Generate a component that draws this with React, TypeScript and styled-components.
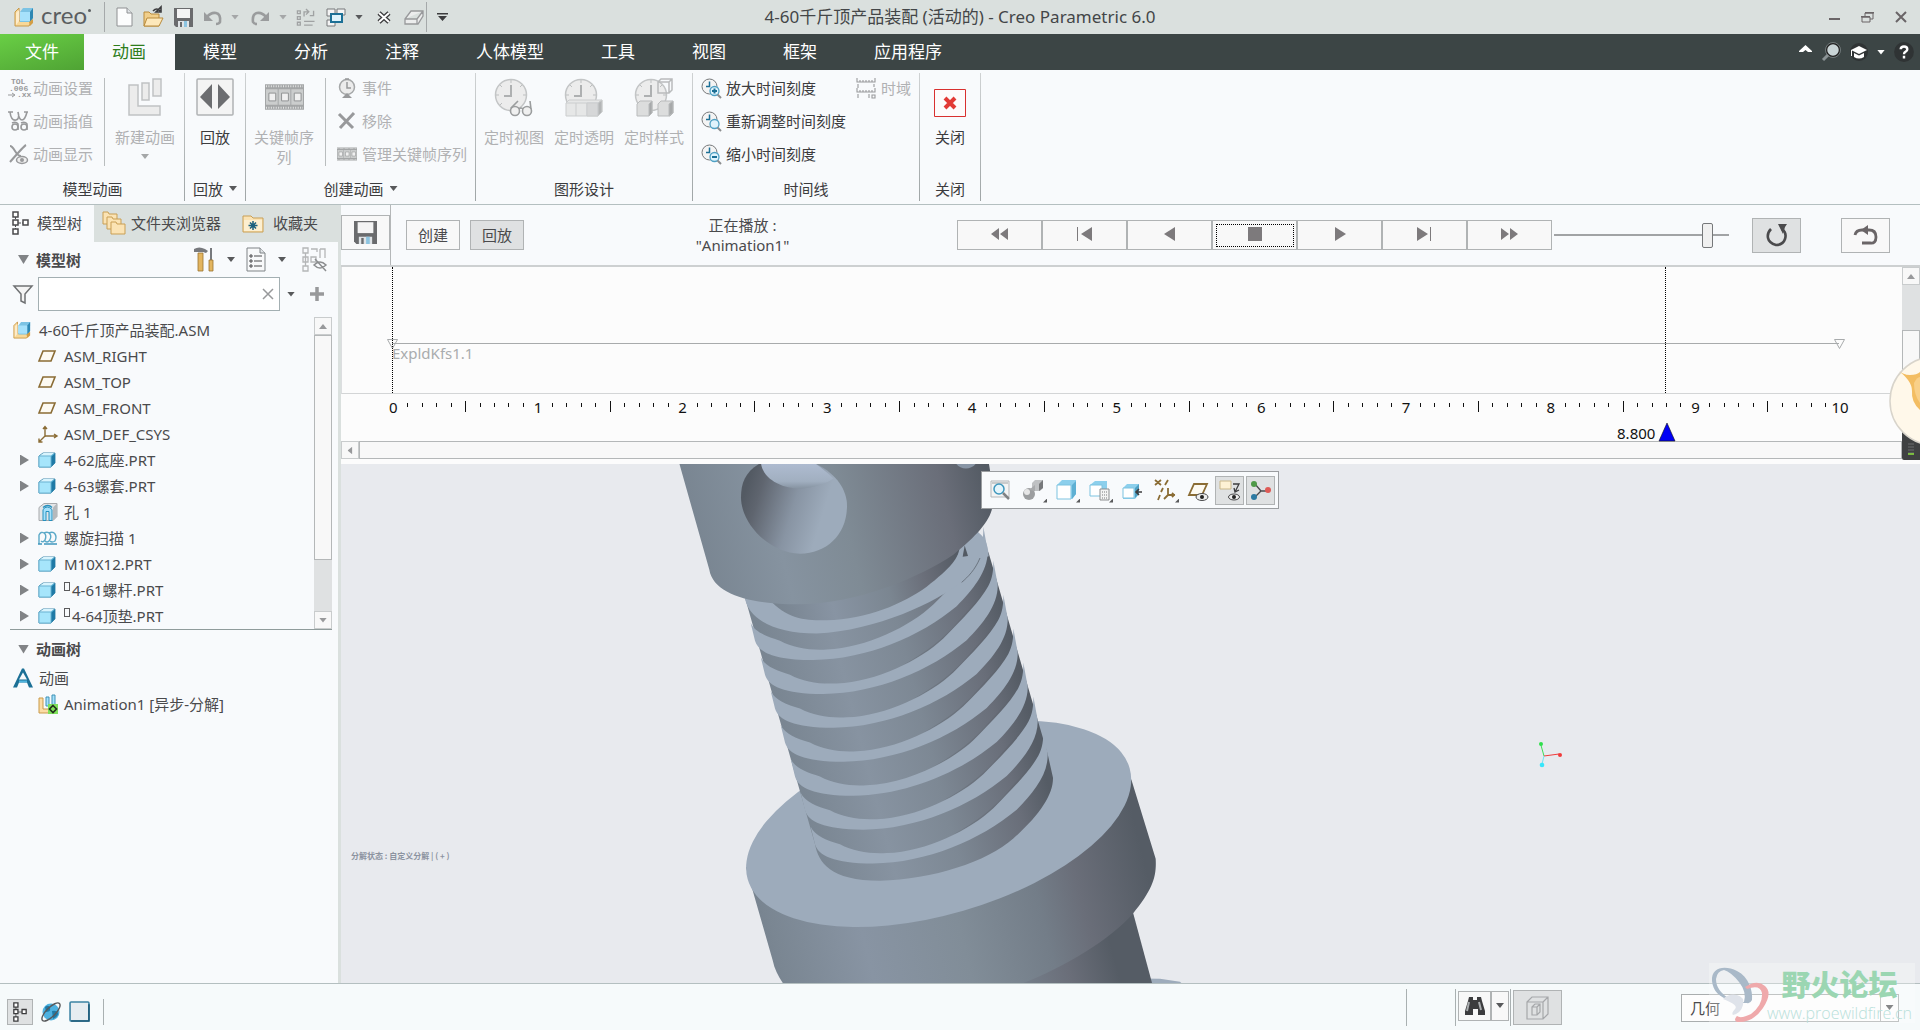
import React from 'react';
import styled, { createGlobalStyle, css } from 'styled-components';

const sans = `"Noto Sans", "Noto Sans CJK SC", sans-serif`;

const Global = createGlobalStyle`
  *, *::before, *::after { box-sizing: border-box; }
  body { margin: 0; background: #f7fafb; color: #4a4a4c; font: 15px/20px ${sans}; }
  button, input, select { font: inherit; color: inherit; margin: 0; }
  button { padding: 0; border: 0; background: none; white-space: nowrap; }
  ul { list-style: none; margin: 0; padding: 0; }
`;

/* ---------- shared parts ---------- */

const App_ = styled.div`
  display: grid;
  grid-template-rows: auto auto auto minmax(0, 1fr) auto;
  height: 100vh;
  min-width: 1280px;
  overflow: hidden;
`;

const Icon = styled.svg<{ $w?: number; $h?: number; $dim?: boolean }>`
  display: block;
  flex: none;
  width: ${p => p.$w ?? 20}px;
  height: ${p => p.$h ?? p.$w ?? 20}px;
  opacity: ${p => (p.$dim ? 0.55 : 1)};
  overflow: visible;
`;

const Caret = styled.span<{ $c?: string; $dir?: 'up' | 'down' | 'left' | 'right' }>`
  flex: none;
  width: 8px;
  height: 5px;
  background: ${p => p.$c ?? '#58595b'};
  clip-path: polygon(0 0, 100% 0, 50% 100%);
  ${p => p.$dir === 'up' && css`transform: rotate(180deg);`}
  ${p => p.$dir === 'left' && css`transform: rotate(90deg);`}
  ${p => p.$dir === 'right' && css`transform: rotate(-90deg);`}
`;

const Push = styled.div`flex: 1;`;

/* ---------- title bar ---------- */

const TitleBar = styled.header`
  display: grid;
  grid-template-columns: 1fr auto 1fr;
  align-items: center;
  height: 34px;
  background: #dae0de;
`;
const QuickBar = styled.div`
  display: flex;
  align-items: center;
  padding-left: 14px;
  height: 34px;
`;
const Brand = styled.div`
  display: flex;
  align-items: center;
  gap: 7px;
  width: 90px;
  font: 24px/24px Lato, sans-serif;
  color: #5a5e61;
`;
const BrandName = styled.span`
  display: flex;
  padding-bottom: 5px;
  &::after {
    content: '';
    width: 3px;
    height: 3px;
    margin: 6px 0 0 1px;
    border-radius: 2px;
    background: #5a5e61;
  }
`;
const QuickSep = styled.span`
  width: 1px;
  height: 30px;
  background: #a5a9aa;
`;
const QuickButton = styled.button<{ $w: number }>`
  display: flex;
  align-items: center;
  justify-content: center;
  width: ${p => p.$w}px;
  height: 30px;
`;
const Title = styled.h1`
  margin: 0;
  font: 400 17px/24px ${sans};
  color: #434648;
`;
const WindowButtons = styled.div`
  display: flex;
  justify-content: flex-end;
  padding-right: 3px;
`;

/* ---------- menu ---------- */

const MenuBar = styled.nav`
  display: flex;
  align-items: stretch;
  height: 36px;
  background: #3c4545;
`;
const MenuTab = styled.button<{ $kind?: 'file' | 'active' }>`
  padding: 0 29px 0 28px;
  font-size: 17px;
  line-height: 34px;
  color: #fff;
  ${p => p.$kind === 'file' && css`
    padding: 0 25px;
    background: linear-gradient(165deg, #69cf45, #4fa334);
  `}
  ${p => p.$kind === 'active' && css`
    background: #f8fafc;
    color: #2f7d1c;
  `}
`;
const MenuTools = styled.div`
  display: flex;
  align-items: center;
  gap: 8px;
  padding-right: 5px;
`;

/* ---------- ribbon ---------- */

const Ribbon = styled.section`
  display: flex;
  height: 135px;
  padding-top: 1px;
  background: #f8fafc;
  border-bottom: 1px solid #b4bfc0;
`;
const Group = styled.div<{ $w: number }>`
  display: grid;
  grid-template-rows: 100px 33px;
  width: ${p => p.$w}px;
`;
const GroupBody = styled.div<{ $pad?: number }>`
  display: flex;
  padding-left: ${p => p.$pad ?? 0}px;
`;
const GroupLabel = styled.div`
  display: flex;
  align-items: center;
  justify-content: center;
  gap: 6px;
  padding-top: 2px;
  color: #3c3c3e;
`;
const GroupSep = styled.span`
  width: 1px;
  margin: 2px 0 3px;
  background: linear-gradient(#cfd2d3, #9fa5a6);
`;
const InnerSep = styled.span`
  flex: none;
  width: 1px;
  height: 88px;
  margin-top: 7px;
  background: #b9bdbe;
`;
const SmallColumn = styled.div<{ $w: number }>`
  width: ${p => p.$w}px;
`;
const SmallButton = styled.button`
  display: flex;
  align-items: center;
  gap: 5px;
  height: 33px;
  color: #3c3c3e;
  &:disabled { color: #b0b1b3; }
`;
const BigButton = styled.button<{ $w: number }>`
  display: flex;
  flex-direction: column;
  align-items: center;
  width: ${p => p.$w}px;
  padding-top: 6px;
  color: #3c3c3e;
  white-space: normal;
  &:disabled { color: #b0b1b3; }
`;
const BigIconBox = styled.span<{ $low?: boolean }>`
  display: grid;
  place-items: ${p => (p.$low ? 'end' : 'center')};
  height: 40px;
  margin-bottom: 10px;
`;
const BigText = styled.span`width: 60px;`;
const CaretLine = styled.span`
  display: grid;
  place-items: center;
  height: 19px;
`;

/* ---------- left panel ---------- */

const Body = styled.div`
  display: grid;
  grid-template-columns: 341px minmax(0, 1fr);
  min-height: 0;
`;
const Side = styled.aside`
  display: flex;
  flex-direction: column;
  border-right: 3px solid #dae0de;
  background: #f8fafc;
`;
const SideTabs = styled.div`
  display: flex;
  height: 37px;
  background: #dae0de;
`;
const SideTab = styled.button<{ $active?: boolean; $w: number }>`
  display: flex;
  align-items: center;
  gap: 5px;
  width: ${p => p.$w}px;
  padding: 0 0 2px ${p => (p.$active ? 12 : 8)}px;
  background: ${p => (p.$active ? '#f8fafc' : 'transparent')};
`;
const PanelHead = styled.div<{ $h: number; $top?: number }>`
  display: flex;
  align-items: center;
  height: ${p => p.$h}px;
  margin-top: ${p => p.$top ?? 0}px;
  padding: 0 11px 0 18px;
`;
const PanelTitle = styled.h2`
  margin: 0 0 0 7px;
  font: 600 15px/20px ${sans};
`;
const HeadTool = styled.button<{ $w: number }>`
  display: flex;
  align-items: center;
  gap: 12px;
  width: ${p => p.$w}px;
`;
const FilterRow = styled.div`
  display: flex;
  align-items: center;
  height: 34px;
  padding-left: 13px;
`;
const FilterBox = styled.div`
  display: flex;
  align-items: center;
  width: 242px;
  height: 34px;
  margin: 0 7px 0 5px;
  border: 1px solid #a3afb2;
  background: #fff;
`;
const FilterInput = styled.input`
  flex: 1;
  min-width: 0;
  height: 30px;
  padding: 0 6px;
  border: 0;
  outline: 0;
  background: none;
`;
const ClearButton = styled.button`
  width: 22px;
  display: grid;
  place-items: center;
`;
const TreeBox = styled.div`
  display: flex;
  height: 313px;
  margin: 6px 6px 0 10px;
  border-bottom: 1px solid #8f9b9b;
`;
const Tree = styled.ul`
  flex: 1;
  overflow: hidden;
`;
const Row = styled.li<{ $level: number }>`
  display: flex;
  align-items: center;
  height: 26px;
  padding-left: ${p => (p.$level ? 8 : 3)}px;
  white-space: nowrap;
`;
const Twist = styled.span`
  display: flex;
  width: 20px;
  flex: none;
`;
const TwistMark = styled.span`
  width: 9px;
  height: 11px;
  margin-left: 2px;
  background: #818386;
  clip-path: polygon(0 0, 100% 50%, 0 100%);
`;
const OpenMark = styled.span`
  width: 11px;
  height: 9px;
  background: #818386;
  clip-path: polygon(0 0, 100% 0, 50% 100%);
`;
const RowText = styled.span`margin-left: 6px;`;
const PlacedMark = styled.sup`
  display: inline-block;
  width: 6px;
  height: 9px;
  margin-right: 2px;
  border: 1px solid #5a5a5c;
  vertical-align: 5px;
`;
const AnimTree = styled.ul`padding-left: 10px;`;

const ScrollColumn = styled.div`
  display: flex;
  flex-direction: column;
  width: 18px;
  background: #dfe1e2;
`;
const ScrollButton = styled.button`
  display: grid;
  place-items: center;
  flex: none;
  width: 18px;
  height: 18px;
  border: 1px solid #c9cccd;
  background: #f8f8f8;
`;
const ScrollThumb = styled.div<{ $h: number }>`
  height: ${p => p.$h}px;
  border: 1px solid #b4b7b8;
  background: #f8f8f8;
`;

/* ---------- player ---------- */

const Main = styled.main`
  display: flex;
  flex-direction: column;
  min-width: 0;
  min-height: 0;
`;
const Player = styled.div`
  display: flex;
  align-items: center;
  height: 62px;
  background: #f8fafc;
  border-bottom: 2px solid #cdd0d1;
`;
const SaveCell = styled.div`
  display: flex;
  align-items: center;
  align-self: stretch;
  width: 50px;
  padding-bottom: 5px;
  border-right: 1px solid #b4b7b8;
`;
const BoxButton = styled.button<{ $w: number; $h: number; $on?: boolean }>`
  display: grid;
  place-items: center;
  flex: none;
  width: ${p => p.$w}px;
  height: ${p => p.$h}px;
  border: 1px solid #b0b3b4;
  background: ${p => (p.$on ? '#dfe1e2' : '#f8f8f8')};
`;
const Modes = styled.div`
  display: flex;
  gap: 10px;
  padding-left: 15px;
`;
const NowPlaying = styled.div`
  flex: 1;
  padding-left: 4px;
  text-align: center;
`;
const Transport = styled.div`
  display: flex;
  width: 595px;
`;
const TransportButton = styled.button`
  display: grid;
  place-items: center;
  flex: 1;
  height: 30px;
  padding: 2px;
  border: 1px solid #b0b3b4;
  background: #f8f8f8;
`;
const FocusRing = styled.span<{ $on?: boolean }>`
  display: grid;
  place-items: center;
  width: 78px;
  height: 23px;
  padding-bottom: 3px;
  border: 1px ${p => (p.$on ? 'dotted #000' : 'solid transparent')};
`;
const Speed = styled.input`
  appearance: none;
  width: 175px;
  height: 26px;
  margin: 0 23px 0 2px;
  background: linear-gradient(#a1a3a5, #a1a3a5) center / 100% 2px no-repeat;
  &::-webkit-slider-thumb {
    appearance: none;
    width: 11px;
    height: 25px;
    border: 1px solid #76787a;
    border-radius: 2px;
    background: #f0f0f0;
  }
`;
const EndTools = styled.div`
  display: flex;
  gap: 40px;
  padding-right: 30px;
`;

/* ---------- timeline ---------- */

const Timeline = styled.section`
  position: relative;
  padding-bottom: 5px;
  background: #fcfcfc;
`;
const TrackArea = styled.div`
  display: flex;
  height: 127px;
  border-bottom: 1px solid #d3d5d6;
  border-left: 1px solid #dcdee0;
`;
const Track = styled.div`
  position: relative;
  flex: 1;
  margin: 0 63px 0 50px;
`;
const TrackLine = styled.div`
  height: 77px;
  border-bottom: 1px solid #a8abac;
`;
const TrackName = styled.div`
  line-height: 18px;
  color: #a9acae;
`;
const Guide = styled.span`
  position: absolute;
  top: 0;
  bottom: 0;
  border-left: 1px dotted #000;
`;
const KeyMark = styled(Icon)`
  position: absolute;
  top: 72px;
  margin-left: -5px;
`;
const Ruler = styled.div`
  display: flex;
  height: 29px;
  padding: 3px 73px 0 45px;
  color: #111;
`;
const Tick = styled.span<{ $major?: boolean }>`
  display: flex;
  flex: 1 1 0;
  width: 0;
  justify-content: center;
  &::before {
    content: '';
    width: 1px;
    height: ${p => (p.$major ? 11 : 4)}px;
    margin-top: ${p => (p.$major ? 4 : 6)}px;
    background: #111;
  }
`;
const TickLabel = styled.span`
  display: flex;
  flex: 1 1 0;
  width: 0;
  justify-content: center;
`;
const CursorRow = styled.div`
  display: flex;
  height: 18px;
  padding: 0 80px 0 52px;
  color: #111;
`;
const CursorTrack = styled.div`position: relative; flex: 1;`;
const Cursor = styled.div`
  position: absolute;
  right: 12%;
  display: flex;
  gap: 4px;
  margin-right: -9px;
  line-height: 20px;
`;
const HScroll = styled.div`
  display: flex;
  height: 18px;
  margin-right: 18px;
`;
const HThumb = styled.div`
  flex: 1;
  border: 1px solid #b4b7b8;
  background: #f8f8f8;
`;

/* ---------- viewport ---------- */

const Viewport = styled.section`
  position: relative;
  flex: 1;
  min-height: 0;
  overflow: hidden;
  background: #e8eaee;
`;
const Scene = styled.svg`
  display: block;
  width: 100%;
  height: 100%;
`;
const SceneNote = styled.div`
  position: absolute;
  left: 10px;
  top: 382px;
  font: 700 8px/20px "Noto Sans CJK SC", sans-serif;
  color: #8c93a0;
`;
const ViewTools = styled.div`
  position: absolute;
  left: 640px;
  top: 7px;
  display: flex;
  align-items: center;
  gap: 3px;
  height: 38px;
  padding: 0 3px;
  border: 1px solid #9a9da0;
  background: #f8fafc;
`;
const ViewTool = styled.button<{ $on?: boolean }>`
  position: relative;
  display: grid;
  place-items: center;
  width: ${p => (p.$on ? 29 : 30)}px;
  height: 29px;
  margin-left: ${p => (p.$on ? -1 : 0)}px;
  border: 1px solid ${p => (p.$on ? '#b0b3b4' : 'transparent')};
  background: ${p => (p.$on ? '#dfe1e2' : 'none')};
`;
const Corner = styled.span`
  position: absolute;
  right: 0;
  bottom: 1px;
  width: 4px;
  height: 4px;
  background: #58595b;
  clip-path: polygon(100% 0, 100% 100%, 0 100%);
`;
const Mascot = styled(Icon)`
  position: absolute;
  right: 0;
  top: 86px;
`;

/* ---------- status bar ---------- */

const StatusBar = styled.footer`
  position: relative;
  display: flex;
  align-items: center;
  height: 47px;
  padding: 1px 21px 0 7px;
  border-top: 1px solid #b4bfc0;
  background: #f6fafb;
`;
const StatusSep = styled.span<{ $h: number; $l: number; $r: number }>`
  width: 1px;
  height: ${p => p.$h}px;
  margin: 0 ${p => p.$r}px 0 ${p => p.$l}px;
  background: #a9b0b1;
`;
const StatusTools = styled.div`
  display: flex;
  align-items: center;
  gap: 8px;
  padding-top: 8px;
`;
const FindBox = styled.div`
  display: flex;
  margin-bottom: 4px;
`;
const Picker = styled.div`
  position: relative;
  display: flex;
  align-items: center;
  width: 218px;
  margin-left: 119px;
`;
const PickerSelect = styled.select`
  appearance: none;
  width: 100%;
  height: 28px;
  padding: 0 8px;
  border: 1px solid #a9adae;
  border-radius: 0;
  background: #fdfdfd;
`;
const PickerArrow = styled.span`
  position: absolute;
  right: 1px;
  display: grid;
  place-items: center;
  width: 18px;
  height: 26px;
  border-left: 1px solid #b4b7b8;
  pointer-events: none;
`;
const Watermark = styled.div`
  position: absolute;
  right: 5px;
  bottom: 7px;
  display: flex;
  width: 206px;
  height: 60px;
  background: rgba(255, 255, 255, 0.28);
  pointer-events: none;
`;
const MarkText = styled.div`
  margin-left: -4px;
  text-align: center;
`;
const MarkName = styled.div`
  font: 900 29px/40px "Noto Sans CJK SC", sans-serif;
  color: #9bd6b2;
`;
const MarkUrl = styled.div`
  font: 300 16px/20px "Open Sans", sans-serif;
  color: #b8e0da;
`;

/* ---------- drawings ---------- */

const AsmIcon = ({ size = 20 }: { size?: number }) => (
  <Icon $w={size} viewBox="0 0 20 20">
    <path d="M1 5l4-4v13h13l-3 5H1z" fill="#f8d898" stroke="#c99a4a" />
    <path d="M2 6l3-3v11l-3 4z" fill="#fdeccb" />
    <path d="M6 5l3-4h10v10l-3 4H6z" fill="#7cc3e4" />
    <path d="M6 5h10v9H6z" fill="#a6e1fb" />
    <path d="M16 5l3-4v10l-3 4z" fill="#2d87b3" />
    <path d="M15 15l4-3v4l-3 3z" fill="#d39e45" />
  </Icon>
);
const DiskIcon = ({ size = 19 }: { size?: number }) => (
  <Icon $w={size} viewBox="0 0 19 19">
    <path d="M0 0h19v19H2l-2-2z" fill="#6a6b6d" />
    <path d="M3 1h13v9H3z" fill="#f4f4f4" />
    <path d="M4 13h11v6H4z" fill="#dfe3e6" />
    <path d="M10 13h3v6h-3z" fill="#8cc4e0" />
    <path d="M6 14h2v5H6z" fill="#6a6b6d" />
  </Icon>
);
const PartIcon = () => (
  <Icon $w={18} $h={16} viewBox="0 0 18 16">
    <path d="M1 4l4-3h12v10l-4 4H1z" fill="#55aed4" stroke="#4a8fb0" />
    <path d="M1 4h12v11H1z" fill="#a6e5fb" stroke="#6cb4d2" />
    <path d="M2 3.500l3.500-2.500H16l-3 2.500z" fill="#d9f4fd" />
    <path d="M13.500 4.500L17 1.500v9l-3.500 4z" fill="#1f7aa6" />
  </Icon>
);
const PlaneIcon = () => (
  <Icon $w={18} $h={14} viewBox="0 0 18 14">
    <path d="M5 2h12l-4 10H1z" fill="#fdfaf2" stroke="#8a6c35" strokeWidth="1.6" />
  </Icon>
);
const CsysIcon = () => (
  <Icon $w={20} $h={18} viewBox="0 0 20 18">
    <path d="M7 11V2M5 4l2-2.500L9 4M7 11h11M16 9l3 2-3 2M7 11l-6 6M1 13.500V17h3.500" fill="none" stroke="#8a6c35" strokeWidth="1.400" />
  </Icon>
);
const HoleIcon = () => (
  <Icon viewBox="0 0 20 19">
    <path d="M1 5l5-4h13v13l-4 4H1z" fill="#e4e6e8" stroke="#a6a9ac" />
    <path d="M15 5l4-4v13l-4 4z" fill="#b5b9bc" />
    <path d="M5 18V7q4-5 9 0v11h-3V9H8v9z" fill="#a6e1fb" stroke="#2490be" />
    <path d="M5 5q5-4 9 0" fill="none" stroke="#2490be" strokeWidth="1.500" />
  </Icon>
);
const HelixIcon = () => (
  <Icon $h={14} viewBox="0 0 20 14">
    <g fill="none" stroke="#5ba9c8" strokeWidth="1.400">
      <path d="M1 13V4q2-4 5-2t1 7q-2 3-4 1" />
      <path d="M6 2q4-2 6 1t-1 7q-2 2-4 0" />
      <path d="M11 2q4-2 6 1t0 7q-3 2-5 0" />
    </g>
    <path d="M0 13h4M6 13h13" stroke="#3f97bd" strokeWidth="1.500" />
  </Icon>
);
const AnimRootIcon = () => (
  <Icon viewBox="0 0 20 19">
    <path d="M0 19L9 0h2l9 19h-4l-2-5H6l-2 5z" fill="#1c7096" />
    <path d="M10 4l4 7H6z" fill="#f8fafc" />
    <path d="M6 13h8" stroke="#4fb4de" strokeWidth="2" />
  </Icon>
);
const AnimIcon = () => (
  <Icon viewBox="0 0 20 20">
    <path d="M1 4h4v11h9v4H1z" fill="#fbdca5" stroke="#c99a4a" />
    <path d="M8 3h3v9H8zM14 1h3v10h-3z" fill="#a6e1fb" stroke="#3c91b6" />
    <rect x="10" y="10" width="10" height="10" fill="#7ee05a" />
    <path d="M15 11.500l3.500 3.500-3.500 3.500-3.500-3.500z" fill="none" stroke="#23301c" strokeWidth="1.600" />
  </Icon>
);
const TreeIcon = () => (
  <Icon $w={17} $h={24} viewBox="0 0 17 24">
    <path d="M3.500 5v14M6 12h5" stroke="#4a4a4c" strokeDasharray="3 1" />
    <path d="M1 1h5v5H1zM1 9h5v5H1zM1 18h5v5H1zM11 9h5v5h-5z" fill="#fff" stroke="#4a4a4c" strokeWidth="1.500" />
  </Icon>
);
const Folder = ({ star }: { star?: boolean }) => (
  <Icon $w={22} $h={20} viewBox="0 0 22 20">
    <path d="M1 3h8l2 2h10v14H1z" fill="#fbe3b4" stroke="#c99f55" />
    <path d="M2 7h18v11H2z" fill="#fdefd0" />
    {star && <path d="M11 8v9M6.500 12.500h9M8 9.500l6 6M14 9.500l-6 6" stroke="#1b607e" strokeWidth="1.500" />}
  </Icon>
);
const Folders = () => (
  <Icon $w={24} viewBox="0 0 24 24">
    {[[0, 0], [4, 5], [8, 10]].map(([x, y]) => (
      <path key={x} d={`M${x + 1} ${y + 1}h5l1 2h8v10H${x + 1}z`} fill="#fbe3b4" stroke="#c99f55" />
    ))}
  </Icon>
);
const Clock = ({ extra }: { extra: 'glasses' | 'cubes' | 'style' }) => (
  <Icon $w={40} $h={40} viewBox="0 0 40 40">
    <circle cx="17" cy="18" r="15.500" fill="#ececec" stroke="#c3c5c6" strokeWidth="1.500" />
    <path d="M17 8v11h-7" fill="none" stroke="#aeb0b1" strokeWidth="2" />
    <path d="M17 3v3M17 30v3M2 18h3M29 18h3M6 8l2 2M28 8l-2 2M6 28l2-2" stroke="#bdbfc0" />
    {extra === 'glasses' && (
      <g fill="#f0f0f0" stroke="#9b9d9e" strokeWidth="1.600">
        <circle cx="21" cy="34" r="4.500" /><circle cx="33" cy="34" r="4.500" />
        <path d="M25 32q2-2 4 0M17 31l7-7M37 32l-1-8" fill="none" />
      </g>
    )}
    {extra === 'cubes' && (
      <g fill="#e6e7e7" stroke="#cbcdce">
        <path d="M2 26l3-3h33v12l-4 4H2z" /><path d="M12 26v13M23 26v13M34 26l4-3M2 26h32v13" fill="none" />
        <path d="M23 26h11v13H23z" fill="#d6d7d8" /><path d="M34 26l4-3v12l-4 4z" fill="#b3b5b6" />
      </g>
    )}
    {extra === 'style' && (
      <g fill="#dcdddd" stroke="#b9bbbc">
        <path d="M24 5l3-3h11v11l-3 3H24zM24 5h11v11M35 5l3-3" fill="none" strokeWidth="1.500" />
        <path d="M3 27l3-3h12v12l-3 3H3zM24 27l3-3h12v12l-3 3H24z" />
        <path d="M15 27l3-3v12l-3 3zM35 27l4-3v12l-4 3z" fill="#a7a9aa" />
      </g>
    )}
  </Icon>
);
const ZoomClock = ({ sign }: { sign: string }) => (
  <Icon viewBox="0 0 20 20">
    <circle cx="8.500" cy="8.500" r="7.500" fill="#f4f4f4" stroke="#77797b" />
    <path d="M8.500 3.500v5H5" fill="none" stroke="#1c7096" strokeWidth="1.500" />
    <circle cx="13.500" cy="13" r="4.500" fill="#dff3fc" stroke="#4ea0c4" strokeWidth="1.300" />
    <path d="M16.500 16.500L20 20" stroke="#8b8d8f" strokeWidth="2" />
    {sign && <path d={sign} stroke="#1c7096" strokeWidth="2" />}
  </Icon>
);
const Film = ({ w, h }: { w: number; h: number }) => (
  <Icon $w={w} $h={h} viewBox="0 0 40 26">
    <path d="M0 0h40v26H0z" fill="#a4a6a7" />
    <path d="M1 2h38M1 24h38" stroke="#e4e5e5" strokeWidth="2" strokeDasharray="1 1.500" />
    <path d="M1 5h12v16H1zM14 5h12v16H14zM27 5h12v16H27z" fill="#cbcdcd" />
    <path d="M4 9h7v8H4zM17 9h7v8h-7zM30 9h7v8h-7z" fill="#f0f0f0" stroke="#8f9192" />
  </Icon>
);
const TolIcon = () => (
  <Icon viewBox="0 0 20 20">
    <g fontFamily="Liberation Mono, monospace" fontSize="8" fontWeight="700" fill="#98999b">
      <text x="3" y="6">TOL</text><text x="1" y="13">.006</text><text x="9" y="19">.xx</text>
    </g>
    <path d="M0 17h6M4 15l3 2-3 2" fill="none" stroke="#98999b" />
  </Icon>
);
const CurveIcon = () => (
  <Icon viewBox="0 0 20 20">
    <g fill="none" stroke="#98999b" strokeWidth="1.600">
      <path d="M0 1h5M16 1h4M2 1q1 9 6 8M8 9q4-1 2-8M10 1q1 8 4 8t5-8" />
      <circle cx="7" cy="16" r="3" /><circle cx="16" cy="16" r="3" /><path d="M4 12q4-2 6 1v6M13 12q4-2 6 1v6" />
    </g>
  </Icon>
);
const CurveEyeIcon = () => (
  <Icon viewBox="0 0 20 20">
    <path d="M2 2q2 0 5 5t6 5M2 18Q16 2 18 1" fill="none" stroke="#98999b" strokeWidth="2" />
    <ellipse cx="14" cy="16" rx="5.500" ry="3.500" fill="#eee" stroke="#98999b" strokeWidth="1.500" />
    <circle cx="14" cy="16" r="2" fill="#98999b" />
  </Icon>
);
const Undo = ({ flip }: { flip?: boolean }) => (
  <Icon $w={20} $h={16} viewBox="0 0 20 16">
    <g transform={flip ? 'translate(20 0) scale(-1 1)' : undefined}>
      <path d="M4 8q4-5 9-4t4 9q-1 2-4 2" fill="none" stroke="#9a9c9d" strokeWidth="2.600" />
      <path d="M1 3v9h9z" fill="#9a9c9d" />
    </g>
  </Icon>
);

const arrows: Record<string, React.ReactNode> = {
  快退: <path d="M9 1v12L1 7zM18 1v12l-8-6z" />,
  首帧: <path d="M2 0h1v14H2zM17 0v14L6 7z" />,
  倒放: <path d="M15 0v14L4 7z" />,
  停止: <path d="M3 0h14v14H3z" />,
  播放: <path d="M5 0l11 7-11 7z" />,
  末帧: <path d="M2 0l11 7-11 7zM15 0h1v14h-1z" />,
  快进: <path d="M1 1l8 6-8 6zM10 1l8 6-8 6z" />,
};

const viewIcons: { name: string; on?: boolean; more?: boolean; art: React.ReactNode }[] = [
  { name: '重新调整', art: <><path d="M1 1h18v16H1z" fill="#f4f4f4" stroke="#b5b7b9" /><path d="M2 2h16v2H2z" fill="#c9cbcc" /><circle cx="9" cy="9" r="5" fill="#e4f5fc" stroke="#3f97bd" strokeWidth="1.500" /><path d="M13 13l6 6" stroke="#808284" strokeWidth="2.500" /></> },
  { name: '外观', more: true, art: <><path d="M9 3l3-3h8v8l-3 3H9z" fill="#bfc1c3" /><path d="M16 4l4-4v8l-4 3z" fill="#77797b" /><circle cx="6" cy="14" r="6" fill="#9c9ea0" /><circle cx="4" cy="12" r="3" fill="#e6e6e6" /><path d="M6 10l6-5v6z" fill="#a8aaac" /></> },
  { name: '显示样式', more: true, art: <><path d="M1 5l5-5h14v14l-4 5H1z" fill="#8ccfec" /><path d="M1 5h14v14H1z" fill="#fff" stroke="#7cc3e0" /><path d="M16 5l4-4v13l-4 5z" fill="#5eb0d3" /></> },
  { name: '已保存方向', more: true, art: <><path d="M1 5l5-4h12v12H1z" fill="#8ccfec" /><path d="M1 5h12v11H1z" fill="#fff" stroke="#7cc3e0" /><path d="M11 9h9v11h-9z" fill="#f4f4f4" stroke="#8b8d8f" /><path d="M13 12h5M13 15h5M13 18h5" stroke="#77797b" strokeDasharray="1 1" /></> },
  { name: '视图管理器', art: <><path d="M1 8l4-4h12v10l-4 5H1z" fill="#8ccfec" /><path d="M1 8h11v10H1z" fill="#fff" stroke="#7cc3e0" /><path d="M13 8l4-4v10l-4 4z" fill="#4ea0c4" /><path d="M20 12h-5M17 9l-3 3 3 3" fill="none" stroke="#3c3c3e" strokeWidth="1.600" /></> },
  { name: '基准显示', more: true, art: <path d="M0 0l6 5M0 5l6-5M13 0l-3 5M8 8l-2 4M5 15l-2 5M13 8v7h7M17 13l2 2-2 2M13 15l-4 4" fill="none" stroke="#8a6c35" strokeWidth="1.800" /> },
  { name: '平面显示', art: <><path d="M6 4h13l-5 11H1z" fill="#fdfaf2" stroke="#8a6c35" strokeWidth="1.800" /><ellipse cx="14" cy="17" rx="6" ry="3.500" fill="#eee" stroke="#4a4a4c" /><circle cx="14" cy="17" r="2" fill="#222" /></> },
  { name: '注释显示', on: true, art: <><path d="M0 1h11v8H0z" fill="#fdf1d4" stroke="#c9b78b" /><path d="M13 4h6l-4 8M14 8l1 4 4-2" fill="none" stroke="#3c3c3e" strokeWidth="1.300" /><ellipse cx="14" cy="17" rx="5.500" ry="3" fill="#eee" stroke="#4a4a4c" /><circle cx="14" cy="17" r="2" fill="#222" /></> },
  { name: '旋转中心', on: true, art: <><path d="M4 4l6 7M4 17l6-6h6" fill="none" stroke="#4a4a4c" strokeWidth="1.300" /><circle cx="3" cy="4" r="3" fill="#4f9a48" /><circle cx="3" cy="17" r="3" fill="#2d7ba3" /><circle cx="17" cy="10" r="3" fill="#de5a55" /></> },
];

const crescent =
  'M465 1137L452 1085C465 1112 500 1125 540 1137C580 1158 630 1166 680 1163C800 1158 930 1095 1000 1030C1060 970 1110 920 1135 875C1148 850 1150 830 1150 800L1163 870C1165 930 1120 985 1070 1035C960 1125 800 1192 640 1194C520 1194 475 1170 465 1137Z';
const rootShade =
  'M880 1108C950 1070 1000 1030 1040 985C1070 950 1095 925 1115 902C1090 945 1050 985 1000 1030C960 1065 920 1090 880 1108Z';

const Model = () => (
  <Scene viewBox="-957 12 4737 1557" preserveAspectRatio="xMinYMin meet" aria-label="千斤顶模型">
    <defs>
      <linearGradient id="flange" gradientUnits="userSpaceOnUse" x1="260" y1="1400" x2="1470" y2="1100">
        <stop offset="0" stopColor="#74808c" /><stop offset=".06" stopColor="#7a8692" /><stop offset=".27" stopColor="#8894a3" /><stop offset=".5" stopColor="#818d98" />
        <stop offset=".7" stopColor="#737d88" /><stop offset=".8" stopColor="#6a6e79" /><stop offset=".97" stopColor="#555c65" />
      </linearGradient>
      <linearGradient id="stem" gradientUnits="userSpaceOnUse" x1="1050" y1="1560" x2="1440" y2="1450">
        <stop offset="0" stopColor="#78838f" /><stop offset=".45" stopColor="#6a6e79" /><stop offset=".8" stopColor="#555c65" />
      </linearGradient>
      <linearGradient id="shaft" gradientUnits="userSpaceOnUse" x1="350" y1="800" x2="1110" y2="600">
        <stop offset="0" stopColor="#788490" /><stop offset=".3" stopColor="#8793a1" /><stop offset=".55" stopColor="#7d8894" />
        <stop offset=".82" stopColor="#696e79" /><stop offset=".95" stopColor="#555c65" />
      </linearGradient>
      <linearGradient id="head" gradientUnits="userSpaceOnUse" x1="90" y1="260" x2="1010" y2="40">
        <stop offset="0" stopColor="#788490" /><stop offset=".28" stopColor="#8693a0" /><stop offset=".5" stopColor="#7f8b95" />
        <stop offset=".82" stopColor="#6a6e79" /><stop offset=".97" stopColor="#535a63" />
      </linearGradient>
      <linearGradient id="neck" gradientUnits="userSpaceOnUse" x1="340" y1="430" x2="900" y2="290">
        <stop offset="0" stopColor="#77838f" /><stop offset=".3" stopColor="#8894a3" /><stop offset=".6" stopColor="#7b8691" />
        <stop offset=".8" stopColor="#6a6e79" /><stop offset="1" stopColor="#535a63" />
      </linearGradient>
      <linearGradient id="bore" gradientUnits="userSpaceOnUse" x1="250" y1="110" x2="540" y2="200">
        <stop offset="0" stopColor="#535a63" /><stop offset=".14" stopColor="#5f656f" /><stop offset=".5" stopColor="#8894a3" /><stop offset=".8" stopColor="#9dabbb" />
      </linearGradient>
      <linearGradient id="far" gradientUnits="userSpaceOnUse" x1="420" y1="12" x2="420" y2="85">
        <stop offset="0" stopColor="#aebbd0" /><stop offset=".7" stopColor="#a1afc0" /><stop offset="1" stopColor="#8592a0" />
      </linearGradient>
    </defs>

    <g transform="scale(1 1.014)">
      <path d="M1440 1569V1534L1500 1535L1560 1544L1590 1569Z" fill="#9dabbb" />
      <path d="M1000 1569L1200 1400L1418 1335L1482 1569Z" fill="url(#stem)" />
      <path d="M258 1205L338 1480C345 1515 365 1545 385 1569H1030C1180 1520 1340 1430 1418 1343C1480 1270 1490 1230 1487 1180L1414 945Z" fill="url(#flange)" />
      <ellipse cx="836" cy="1076" rx="596" ry="268" transform="rotate(-16 836 1076)" fill="#9dabbb" />

      <path d="M253 400L465 1137C475 1190 510 1245 660 1245C820 1240 980 1190 1060 1120C1140 1050 1180 990 1179 940L1163 870L986 275L955 215L600 300Z" fill="url(#shaft)" />
      {[0, 1, 2, 3, 4, 5, 6].map(n => (
        <g key={n} transform={`translate(${-30 * n} ${-100.400 * n})`}>
          {n < 6 && <path d={rootShade} fill="#5b616b" opacity=".35" />}
          <path d={crescent} fill="#9dabbb" />
        </g>
      ))}
      <path d="M253 400C262 470 340 513 470 513C650 505 830 420 905 360L955 292L986 285C984 240 970 225 950 210Z" fill="#9dabbb" />
      <path d="M335 420C390 474 440 474 500 474C620 472 730 425 800 375C870 320 900 290 899 250L600 300Z" fill="url(#neck)" />
      <path d="M908 286L914 253L924 284Z" fill="#535a63" />
      <path d="M960 290C945 325 925 345 905 362" fill="none" stroke="#535a63" strokeWidth="2" />

      <path d="M55 0L148 325C160 400 280 427 410 427C600 425 780 345 880 280C950 225 990 180 997 140L990 30L985 0Z" fill="url(#head)" />
      <path d="M300 10C255 35 243 70 243 110C243 190 330 277 420 277C500 277 561 220 561 135C561 90 530 40 465 10Z" fill="url(#bore)" />
      <path d="M303 10C310 60 370 85 420 85C460 83 500 70 520 55C500 35 480 20 465 10Z" fill="url(#far)" />
      <path d="M888 10C900 30 935 30 948 10Z" fill="#8996a6" />
    </g>

    <g strokeWidth="3">
      <path d="M2643 856L2652 888" stroke="#3ddc55" /><path d="M2652 888L2697 882" stroke="#f03b3b" /><path d="M2652 888L2646 912" stroke="#6de4f4" />
      <circle cx="2643" cy="852" r="6" fill="#2fe04c" /><circle cx="2700" cy="885" r="6" fill="#f03b3b" /><circle cx="2646" cy="915" r="7" fill="#38e6fa" />
    </g>
  </Scene>
);

/* ---------- data ---------- */

const menu = ['模型', '分析', '注释', '人体模型', '工具', '视图', '框架', '应用程序'];

const tree: { icon: React.ReactNode; text: string; more?: boolean; placed?: boolean }[] = [
  { icon: <PlaneIcon />, text: 'ASM_RIGHT' },
  { icon: <PlaneIcon />, text: 'ASM_TOP' },
  { icon: <PlaneIcon />, text: 'ASM_FRONT' },
  { icon: <CsysIcon />, text: 'ASM_DEF_CSYS' },
  { icon: <PartIcon />, text: '4-62底座.PRT', more: true },
  { icon: <PartIcon />, text: '4-63螺套.PRT', more: true },
  { icon: <HoleIcon />, text: '孔 1' },
  { icon: <HelixIcon />, text: '螺旋扫描 1', more: true },
  { icon: <PartIcon />, text: 'M10X12.PRT', more: true },
  { icon: <PartIcon />, text: '4-61螺杆.PRT', more: true, placed: true },
  { icon: <PartIcon />, text: '4-64顶垫.PRT', more: true, placed: true },
];

const IconSlot = styled.span`
  display: flex;
  flex: none;
  width: 20px;
`;

const ticks = Array.from({ length: 101 }, (_, i) => i);

export default function App() {
  return (
    <App_>
      <Global />
      <TitleBar>
        <QuickBar>
          <Brand><AsmIcon /><BrandName>creo</BrandName></Brand>
          <QuickSep />
          <QuickButton $w={38} aria-label="新建">
            <Icon $w={17} $h={20} viewBox="0 0 17 20"><path d="M1 1h10l5 5v13H1z" fill="#fcfdfd" stroke="#8e9092" /><path d="M11 1v5h5" fill="#dfe3e6" stroke="#8e9092" /></Icon>
          </QuickButton>
          <QuickButton $w={20} aria-label="打开">
            <Icon $w={20} viewBox="0 0 20 20"><path d="M1 5h5l2 2h8v12H1z" fill="#f1cf8b" stroke="#b98b3c" /><path d="M4 11h16l-4 8H1z" fill="#fde8bb" stroke="#b98b3c" /><path d="M10 4q4-4 7 0M18 0v5h-5z" fill="none" stroke="#3c3c3e" strokeWidth="1.600" /></Icon>
          </QuickButton>
          <QuickButton $w={40} aria-label="保存"><DiskIcon /></QuickButton>
          <QuickButton $w={20} aria-label="撤消"><Undo /></QuickButton>
          <QuickButton $w={24} aria-label="撤消列表"><Caret $c="#a5a7a8" /></QuickButton>
          <QuickButton $w={26} aria-label="重做"><Undo flip /></QuickButton>
          <QuickButton $w={20} aria-label="重做列表"><Caret $c="#a5a7a8" /></QuickButton>
          <QuickButton $w={24} aria-label="重新生成">
            <Icon $w={19} viewBox="0 0 19 20"><path d="M1 3h3v3H1zM1 9h3v3H1zM1 15h3v3H1zM8 14h11M8 18h9M8 9V4h4M10 1l3 3-3 3M18 3v5h-4" fill="none" stroke="#a0a2a3" strokeWidth="1.400" /></Icon>
          </QuickButton>
          <QuickButton $w={36} aria-label="窗口">
            <Icon $w={19} viewBox="0 0 19 19"><path d="M1 1h8v7H1zM11 1h8v6h-8zM1 12h8v6H1z" fill="#f4f4f4" stroke="#77797b" /><path d="M5 6h11v8H5z" fill="#dff4fc" stroke="#1c7096" strokeWidth="2" /></Icon>
          </QuickButton>
          <QuickButton $w={12} aria-label="窗口列表"><Caret /></QuickButton>
          <QuickButton $w={37} aria-label="关闭窗口">
            <Icon $w={14} $h={13} viewBox="0 0 14 13"><path d="M2 2l10 9M12 2L2 11" stroke="#3c3c3e" strokeWidth="4.500" /><path d="M2 2l10 9M12 2L2 11" stroke="#fff" strokeWidth="2" /></Icon>
          </QuickButton>
          <QuickButton $w={24} aria-label="清除">
            <Icon $w={20} $h={15} viewBox="0 0 20 15"><path d="M1 9l6-8h12v5l-5 8H1zM1 9h12l6-8M13 9v5" fill="#eceded" stroke="#98999b" strokeWidth="1.300" /></Icon>
          </QuickButton>
          <QuickSep />
          <QuickButton $w={30} aria-label="自定义">
            <Icon $w={11} $h={9} viewBox="0 0 11 9"><path d="M0 0h11v1.500H0zM1 3h9L5.500 8z" fill="#3c3c3e" /></Icon>
          </QuickButton>
        </QuickBar>
        <Title>4-60千斤顶产品装配 (活动的) - Creo Parametric 6.0</Title>
        <WindowButtons>
          <QuickButton $w={33} aria-label="最小化"><Icon $w={12} viewBox="0 0 12 12"><path d="M1 7h11v2H1z" fill="#6a6567" /></Icon></QuickButton>
          <QuickButton $w={34} aria-label="还原"><Icon $w={13} $h={11} viewBox="0 0 13 11"><path d="M1 5h8v5H1zM4 4V1h8v6H9" fill="none" stroke="#6a6567" /><path d="M0 4h9v1.500H0zM4 0h9v1.500H4z" fill="#6a6567" /></Icon></QuickButton>
          <QuickButton $w={33} aria-label="关闭"><Icon $w={10} viewBox="0 0 10 10"><path d="M0 0l10 10M10 0L0 10" stroke="#6a6567" strokeWidth="2" /></Icon></QuickButton>
        </WindowButtons>
      </TitleBar>

      <MenuBar>
        <MenuTab $kind="file">文件</MenuTab>
        <MenuTab $kind="active">动画</MenuTab>
        {menu.map(m => <MenuTab key={m}>{m}</MenuTab>)}
        <Push />
        <MenuTools>
          <button aria-label="折叠功能区"><Icon $w={15} $h={14} viewBox="0 0 15 14"><path d="M1 6l6.500-6L14 6v1h-4L7.500 5 5 7H1z" fill="#fff" /></Icon></button>
          <button aria-label="搜索"><Icon $w={20} viewBox="0 0 20 20"><circle cx="12" cy="8" r="6.500" fill="#c9d4d6" stroke="#222" strokeWidth="1.500" /><circle cx="12" cy="8" r="7.500" fill="none" stroke="#8b9395" strokeWidth=".7" /><path d="M2 18l5-5" stroke="#8b9395" strokeWidth="3" /></Icon></button>
          <button aria-label="学习"><Icon $w={20} viewBox="0 0 20 20"><circle cx="10" cy="10" r="9" fill="#2f3334" /><path d="M2 8l8-4 8 4-8 4z" fill="#fff" /><path d="M5 11v4q5 3 10 0v-4l-5 2.500zM2 8h1v6H2z" fill="#fff" /></Icon></button>
          <Caret $c="#fff" />
          <button aria-label="帮助"><Icon $w={22} viewBox="0 0 20 20"><circle cx="10" cy="10" r="9" fill="#2f3334" /><path d="M7 7.500q0-2.500 3-2.500t3 2.500q0 1.500-1.500 2.200T10 12M10 13.500v2.500" fill="none" stroke="#fff" strokeWidth="2.200" /></Icon></button>
        </MenuTools>
      </MenuBar>

      <Ribbon>
        <Group $w={184}>
          <GroupBody $pad={8}>
            <SmallColumn $w={96}>
              <SmallButton disabled><TolIcon />动画设置</SmallButton>
              <SmallButton disabled><CurveIcon />动画插值</SmallButton>
              <SmallButton disabled><CurveEyeIcon />动画显示</SmallButton>
            </SmallColumn>
            <InnerSep />
            <BigButton $w={80} disabled>
              <BigIconBox><Icon $w={34} $h={38} viewBox="0 0 34 38"><path d="M1 7h9v21h22v9H1zM14 5h7v17h-7zM25 1h8v17h-8z" fill="#ececec" stroke="#c0c2c3" strokeWidth="1.500" /></Icon></BigIconBox>
              <BigText>新建动画</BigText>
              <CaretLine><Caret $c="#a5a7a8" /></CaretLine>
            </BigButton>
          </GroupBody>
          <GroupLabel>模型动画</GroupLabel>
        </Group>
        <GroupSep />
        <Group $w={60}>
          <GroupBody>
            <BigButton $w={60}>
              <BigIconBox><Icon $w={38} viewBox="0 0 38 38"><rect x="1" y="1" width="36" height="36" rx="1" fill="#f4f4f4" stroke="#b0b3b4" strokeWidth="1.500" /><path d="M16 6v25L4 19zM22 6v25l12-12z" fill="#6c6d70" /></Icon></BigIconBox>
              <span>回放</span>
            </BigButton>
          </GroupBody>
          <GroupLabel>回放<Caret /></GroupLabel>
        </Group>
        <GroupSep />
        <Group $w={229}>
          <GroupBody>
            <BigButton $w={76} disabled>
              <BigIconBox><Film w={39} h={26} /></BigIconBox>
              <BigText>关键帧序列</BigText>
            </BigButton>
            <GroupBody $pad={3}>
              <InnerSep />
            </GroupBody>
            <GroupBody $pad={11}>
              <SmallColumn $w={138}>
                <SmallButton disabled><Icon viewBox="0 0 20 20"><circle cx="10" cy="9" r="7.500" fill="#ececec" stroke="#a5a7a8" strokeWidth="1.500" /><path d="M10 4v6h4M8 1h4" fill="none" stroke="#98999b" strokeWidth="1.500" /><path d="M5 20l5-5 5 5z" fill="#98999b" /></Icon>事件</SmallButton>
                <SmallButton disabled><Icon viewBox="0 0 20 20"><path d="M2 3l14 14M17 2L3 17" stroke="#98999b" strokeWidth="3" /></Icon>移除</SmallButton>
                <SmallButton disabled><Film w={20} h={14} />管理关键帧序列</SmallButton>
              </SmallColumn>
            </GroupBody>
          </GroupBody>
          <GroupLabel>创建动画<Caret /></GroupLabel>
        </Group>
        <GroupSep />
        <Group $w={216}>
          <GroupBody $pad={3}>
            <BigButton $w={70} disabled><BigIconBox><Clock extra="glasses" /></BigIconBox><BigText>定时视图</BigText></BigButton>
            <BigButton $w={70} disabled><BigIconBox><Clock extra="cubes" /></BigIconBox><BigText>定时透明</BigText></BigButton>
            <BigButton $w={70} disabled><BigIconBox><Clock extra="style" /></BigIconBox><BigText>定时样式</BigText></BigButton>
          </GroupBody>
          <GroupLabel>图形设计</GroupLabel>
        </Group>
        <GroupSep />
        <Group $w={226}>
          <GroupBody $pad={8}>
            <SmallColumn $w={155}>
              <SmallButton><ZoomClock sign="M11 13h5M13.500 10.500v5" />放大时间刻度</SmallButton>
              <SmallButton><ZoomClock sign="" />重新调整时间刻度</SmallButton>
              <SmallButton><ZoomClock sign="M11 13h5" />缩小时间刻度</SmallButton>
            </SmallColumn>
            <SmallColumn $w={60}>
              <SmallButton disabled><Icon viewBox="0 0 20 20"><path d="M1 0v4h18V0M4 2v2M7 2v2M10 2v2M13 2v2M16 2v2M1 10v4h18v-4M4 12v2M7 12v2M10 12v2M13 12v2M16 12v2M2 6v4M18 6v3M2 16v4M13 16v4M16 17h3v3h-3z" fill="none" stroke="#98999b" strokeWidth="1.100" /></Icon>时域</SmallButton>
            </SmallColumn>
          </GroupBody>
          <GroupLabel>时间线</GroupLabel>
        </Group>
        <GroupSep />
        <Group $w={60}>
          <GroupBody>
            <BigButton $w={60}>
              <BigIconBox $low><Icon $w={32} $h={28} viewBox="0 0 32 28"><path d="M.5.5h31v27H.500z" fill="#fdfbfb" stroke="#d8302f" /><path d="M11 9l10 10M21 9L11 19" stroke="#e23a35" strokeWidth="4" /></Icon></BigIconBox>
              <span>关闭</span>
            </BigButton>
          </GroupBody>
          <GroupLabel>关闭</GroupLabel>
        </Group>
        <GroupSep />
      </Ribbon>

      <Body>
        <Side>
          <SideTabs>
            <SideTab $w={94} $active><IconSlot><TreeIcon /></IconSlot>模型树</SideTab>
            <SideTab $w={140}><Folders />文件夹浏览器</SideTab>
            <SideTab $w={104}><Folder star />&nbsp;收藏夹</SideTab>
          </SideTabs>
          <PanelHead $h={35}>
            <OpenMark /><PanelTitle>模型树</PanelTitle>
            <Push />
            <HeadTool $w={53} aria-label="设置">
              <Icon $w={22} $h={25} viewBox="0 0 22 25"><path d="M1 2q5-3 11 0l3 2-2 2-3-1H1z" fill="#77797d" /><path d="M5 6h5v18H5z" fill="#e3b55f" stroke="#9b7431" strokeWidth=".8" /><path d="M18 1v12" stroke="#77797d" strokeWidth="2" /><path d="M16 13h4v11h-4z" fill="#e3b55f" stroke="#9b7431" strokeWidth=".8" /></Icon>
              <Caret />
            </HeadTool>
            <HeadTool $w={56} aria-label="显示">
              <Icon $w={20} $h={25} viewBox="0 0 20 25"><path d="M1 1h13l5 5v18H1z" fill="#f8f9fa" stroke="#7f8386" /><path d="M14 1v5h5" fill="#dfe3e6" stroke="#7f8386" /><path d="M8 9h8M8 14h8M8 19h8" stroke="#4a4a4c" /><path d="M4 8h2v2H4zM4 13h2v2H4zM4 18h2v2H4z" fill="none" stroke="#4a4a4c" /></Icon>
              <Caret />
            </HeadTool>
            <HeadTool $w={25} aria-label="隐藏列">
              <Icon $w={25} viewBox="0 0 25 25"><g fill="none" stroke="#b4b6b7" strokeWidth="1.300"><path d="M1 1h5v5H1zM1 10h5v5H1zM1 19h5v5H1zM9 10h5v5H9zM3.500 6v13M9 2h6v3M18 2h5v9M18 2v9" /></g><path d="M12 18q6-6 12 0-6 6-12 0zM13 12l11 12" fill="none" stroke="#8b8d8f" strokeWidth="1.500" /></Icon>
            </HeadTool>
          </PanelHead>
          <FilterRow>
            <Icon $h={18} viewBox="0 0 20 18"><path d="M1 1h18l-7 8v9l-4-2V9z" fill="#f4f4f4" stroke="#6f7173" strokeWidth="1.500" /></Icon>
            <FilterBox>
              <FilterInput aria-label="筛选模型树" />
              <ClearButton aria-label="清除筛选"><Icon $w={10} viewBox="0 0 10 10"><path d="M0 0l10 10M10 0L0 10" stroke="#98999b" strokeWidth="1.500" /></Icon></ClearButton>
            </FilterBox>
            <Caret />
            <Push />
            <HeadTool $w={28} aria-label="添加"><Icon $w={14} viewBox="0 0 14 14"><path d="M7 0v14M0 7h14" stroke="#98999b" strokeWidth="3.500" /></Icon></HeadTool>
          </FilterRow>
          <TreeBox>
            <Tree>
              <Row $level={0}><IconSlot><AsmIcon size={18} /></IconSlot><RowText>4-60千斤顶产品装配.ASM</RowText></Row>
              {tree.map(r => (
                <Row key={r.text} $level={1}>
                  <Twist>{r.more && <TwistMark />}</Twist>
                  <IconSlot>{r.icon}</IconSlot>
                  <RowText>{r.placed && <PlacedMark />}{r.text}</RowText>
                </Row>
              ))}
            </Tree>
            <ScrollColumn>
              <ScrollButton aria-label="向上滚动"><Caret $c="#98999b" $dir="up" /></ScrollButton>
              <ScrollThumb $h={225} />
              <Push />
              <ScrollButton aria-label="向下滚动"><Caret $c="#98999b" /></ScrollButton>
            </ScrollColumn>
          </TreeBox>
          <PanelHead $h={32} $top={3}><OpenMark /><PanelTitle>动画树</PanelTitle></PanelHead>
          <AnimTree>
            <Row $level={0}><IconSlot><AnimRootIcon /></IconSlot><RowText>动画</RowText></Row>
            <Row $level={1}><Twist /><IconSlot><AnimIcon /></IconSlot><RowText>Animation1 [异步-分解]</RowText></Row>
          </AnimTree>
        </Side>

        <Main>
          <Player>
            <SaveCell><BoxButton $w={49} $h={35} aria-label="保存动画"><DiskIcon size={23} /></BoxButton></SaveCell>
            <Modes>
              <BoxButton $w={54} $h={30}>创建</BoxButton>
              <BoxButton $w={54} $h={30} $on>回放</BoxButton>
            </Modes>
            <NowPlaying>正在播放 :<br />"Animation1"</NowPlaying>
            <Transport>
              {Object.entries(arrows).map(([name, art]) => (
                <TransportButton key={name} aria-label={name}>
                  <FocusRing $on={name === '停止'}><Icon $w={20} $h={14} viewBox="0 0 20 14" fill="#7d7a7c">{art}</Icon></FocusRing>
                </TransportButton>
              ))}
            </Transport>
            <Speed type="range" min={0} max={100} defaultValue={90} aria-label="速度" />
            <EndTools>
              <BoxButton $w={49} $h={35} $on aria-label="循环">
                <Icon $w={22} viewBox="0 0 22 22"><path d="M5 5q-4 4-3 9t8 7q7 0 9-6t-3-10" fill="none" stroke="#4a4a4c" strokeWidth="2.600" /><path d="M12 0h9l-2 3-2 7z" fill="#4a4a4c" /></Icon>
              </BoxButton>
              <BoxButton $w={49} $h={35} aria-label="返回">
                <Icon $w={24} $h={20} viewBox="0 0 24 20"><path d="M1 10q1-5 7-5h7q7 0 7 7t-6 6H8" fill="none" stroke="#6a6567" strokeWidth="2.800" /><path d="M14 0v10L7 5z" fill="#6a6567" /></Icon>
              </BoxButton>
            </EndTools>
          </Player>

          <Timeline>
            <TrackArea>
              <Track>
                <TrackLine />
                <TrackName>ExpldKfs1.1</TrackName>
                {['0%', '100%'].map(at => (
                  <KeyMark key={at} $w={11} $h={10} viewBox="0 0 11 10" style={{ left: at }}><path d="M.5.5h10L5.500 9.500z" fill="none" stroke="#a8abac" /></KeyMark>
                ))}
                {['0%', '88%'].map(at => <Guide key={at} style={{ left: at }} />)}
              </Track>
              <ScrollColumn>
                <ScrollButton aria-label="向上滚动"><Caret $c="#98999b" $dir="up" /></ScrollButton>
                <Push />
                <ScrollThumb $h={63} />
              </ScrollColumn>
            </TrackArea>
            <Ruler>
              {ticks.map(i => i % 10 === 0
                ? <TickLabel key={i}>{i / 10}</TickLabel>
                : <Tick key={i} $major={i % 5 === 0} />)}
            </Ruler>
            <CursorRow>
              <CursorTrack>
                <Cursor>8.800<Icon $w={16} $h={18} viewBox="0 0 16 18"><path d="M8 0l8 18H0z" fill="#0000f5" stroke="#111" strokeWidth=".6" /></Icon></Cursor>
              </CursorTrack>
            </CursorRow>
            <HScroll>
              <ScrollButton aria-label="向左滚动"><Caret $c="#98999b" $dir="left" /></ScrollButton>
              <HThumb />
            </HScroll>
            <Mascot $w={31} $h={108} viewBox="0 0 31 108">
              <rect x="13" y="62" width="20" height="45" rx="2" fill="#3f4142" />
              <path d="M19 91h6M19 94h6M19 97h6M19 100h6" stroke="#6a6c6d" />
              <path d="M19 101h6" stroke="#8be03c" strokeWidth="1.500" />
              <clipPath id="edge"><rect width="31" height="108" /></clipPath>
              <g clipPath="url(#edge)">
                <circle cx="45" cy="48" r="44" fill="#fff8ea" stroke="#d8d4cb" strokeWidth="1.500" />
                <path d="M7 16q7 6 14 6t10-3v38q-9-8-8-19 0-11-16-22z" fill="#f3bd62" />
                <path d="M25 30q3-6 6-6v26q-6-8-6-20z" fill="#f9d089" />
              </g>
            </Mascot>
          </Timeline>

          <Viewport>
            <Model />
            <SceneNote>分解状态 : 自定义分解 | ( + )</SceneNote>
            <ViewTools>
              {viewIcons.map(v => (
                <ViewTool key={v.name} $on={v.on} aria-label={v.name}>
                  <Icon viewBox="0 0 20 20">{v.art}</Icon>
                  {v.more && <Corner />}
                </ViewTool>
              ))}
            </ViewTools>
          </Viewport>
        </Main>
      </Body>

      <StatusBar>
        <StatusTools>
          <BoxButton $w={26} $h={26} $on aria-label="导航器"><Icon $w={14} $h={20} viewBox="0 0 17 24"><path d="M3.500 5v14M6 12h5" stroke="#4a4a4c" /><path d="M1 1h5v5H1zM1 9h5v5H1zM1 18h5v5H1zM11 9h5v5h-5z" fill="#fff" stroke="#3c3c3e" strokeWidth="1.600" /></Icon></BoxButton>
          <button aria-label="浏览器"><Icon $w={20} viewBox="0 0 20 20"><circle cx="10" cy="10" r="8.500" fill="#4db1e0" /><path d="M4 5q4-3 5 1t-4 4zM11 9q5-1 6 2t-5 6z" fill="#1f7aa6" /><ellipse cx="10" cy="10" rx="12" ry="4.500" transform="rotate(-45 10 10)" fill="none" stroke="#58595b" strokeWidth="1.400" /></Icon></button>
          <button aria-label="全屏"><Icon $w={21} viewBox="0 0 20 20"><rect x="1" y="1" width="18" height="18" rx="1" fill="#e6edf1" stroke="#3d84a4" strokeWidth="1.500" /><path d="M2 19h17V3" fill="none" stroke="#1b5a78" strokeWidth="1.500" /></Icon></button>
          <StatusSep $h={26} $l={5} $r={0} />
        </StatusTools>
        <Push />
        <StatusSep $h={37} $l={0} $r={48} />
        <StatusSep $h={37} $l={0} $r={2} />
        <FindBox>
          <BoxButton $w={33} $h={30} aria-label="查找"><Icon $w={20} viewBox="0 0 20 20"><path d="M4 1h4v3h4V1h4l1 4 3 10v4h-7v-6H8v6H0v-4L3 5z" fill="#3c3c3e" /><path d="M4 6l-2 9M14 6l2 8" stroke="#aaadaf" strokeWidth="2" /></Icon></BoxButton>
          <BoxButton $w={18} $h={30} aria-label="查找选项"><Caret /></BoxButton>
        </FindBox>
        <StatusSep $h={37} $l={1} $r={2} />
        <BoxButton $w={49} $h={35} aria-label="3D 框选择" disabled $on><Icon $w={23} $h={24} $dim viewBox="0 0 23 24"><path d="M1 6l5-5h16v17l-5 5H1zM1 6h16v17M17 6l5-5M6 11l3-3h5v8l-3 3H6zM6 11h5v8M11 11l3-3" fill="none" stroke="#77797b" strokeWidth="1.200" /></Icon></BoxButton>
        <Picker>
          <PickerSelect aria-label="选择过滤器" defaultValue="geo"><option value="geo">几何</option></PickerSelect>
          <PickerArrow><Caret /></PickerArrow>
        </Picker>
        <Watermark>
          <Icon $w={62} $h={60} viewBox="0 0 62 60">
            <path fillRule="evenodd" d="M3 18C2 4 16 2 28 8s16 20 15 29q-2 4-5 3-6 0-16-2C10 34 4 28 3 18zM7 16q0 12 14 20 8 4 14 3 3-10-5-20T15 7q-7 1-8 9z" fill="#a9b9c8" />
            <path fillRule="evenodd" d="M36 24q12-8 20-1t-2 22-26 14q-4-2 0-6 4 3 14-2 12-9 11-21-2-9-15-4z" fill="#efa9ab" />
            <path d="M14 36q6-6 14-4t6 10-10 10q-2-2 2-6t-12-10z" fill="#dfe3ea" />
          </Icon>
          <MarkText>
            <MarkName>野火论坛</MarkName>
            <MarkUrl>www.proewildfire.cn</MarkUrl>
          </MarkText>
        </Watermark>
      </StatusBar>
    </App_>
  );
}
